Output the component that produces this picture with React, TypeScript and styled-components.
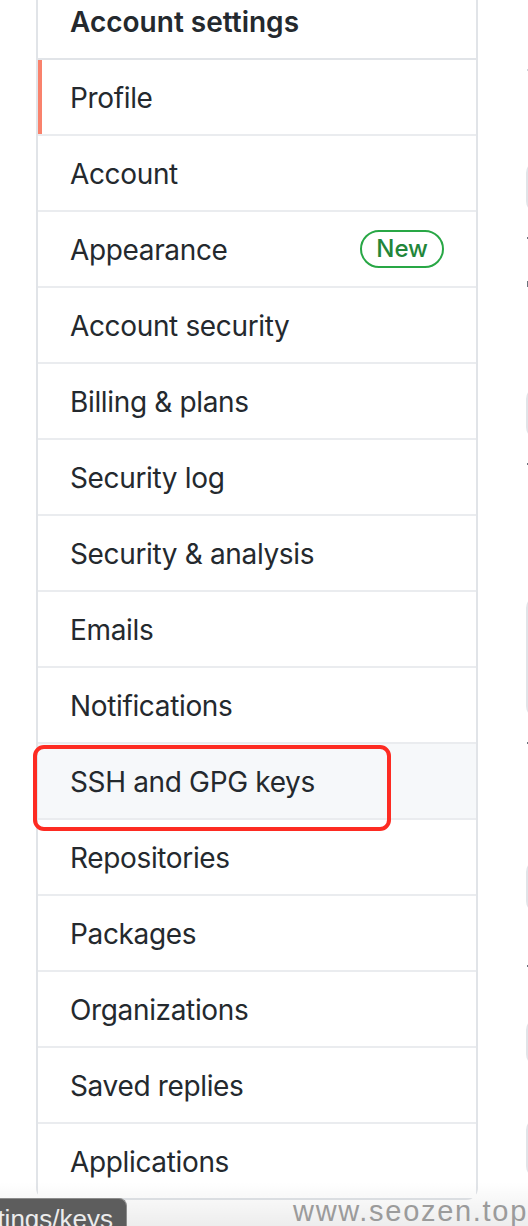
import React from "react";
import styled, { createGlobalStyle } from "styled-components";

const Global = createGlobalStyle`
  html, body { margin: 0; padding: 0; background: #ffffff; }
  body { width: 528px; height: 1226px; overflow: hidden; font-family: Inter, "Noto Sans", sans-serif; }
  #root { height: 1226px; }
`;

const Page = styled.div`
  position: relative;
  display: flex;
  align-items: flex-start;
  width: 528px;
  height: 1226px;
  overflow: hidden;
  background: #ffffff;
`;

const Sidebar = styled.nav`
  flex: 0 0 442px;
  box-sizing: border-box;
  margin: -18px 0 0 36px;
  border: 2px solid #e1e4e8;
  border-radius: 12px;
  background: #ffffff;
  color: #24292e;
`;

const Heading = styled.div`
  padding: 17px 32px 15px;
  font-size: 28px;
  line-height: 42px;
  font-weight: 600;
  border-bottom: 2px solid #e1e4e8;
`;

const Item = styled.a<{ $selected?: boolean; $hover?: boolean; $last?: boolean }>`
  position: relative;
  display: flex;
  align-items: center;
  justify-content: space-between;
  padding: 17px 32px 15px;
  font-size: 28px;
  line-height: 42px;
  font-weight: 400;
  letter-spacing: -0.35px;
  color: #24292e;
  text-decoration: none;
  background: ${(p) => (p.$hover ? "#f6f8fa" : "#ffffff")};
  border-bottom: ${(p) => (p.$last ? "none" : "2px solid #eaecef")};
  &::before {
    content: "";
    display: ${(p) => (p.$selected ? "block" : "none")};
    position: absolute;
    left: 0;
    top: 0;
    bottom: 0;
    width: 4px;
    background: #f9826c;
  }
`;

const Badge = styled.span`
  display: inline-block;
  margin-top: -2px;
  padding: 0 14px;
  font-size: 24px;
  line-height: 34px;
  font-weight: 500;
  letter-spacing: 0;
  color: #22863a;
  border: 2px solid #28a745;
  border-radius: 40px;
`;

const Annotation = styled.span`
  position: absolute;
  left: -5px;
  top: 1px;
  width: 358px;
  height: 86px;
  box-sizing: border-box;
  border: 4px solid #fd2b22;
  border-radius: 11px;
  z-index: 2;
  pointer-events: none;
`;

const Main = styled.div`
  flex: 1 1 auto;
  display: flex;
  flex-direction: column;
  align-items: flex-start;
  padding-left: 48px;
  min-width: 0;
  overflow: hidden;
`;

const Dot = styled.span<{ $mt: number; $h?: number; $light?: boolean }>`
  display: block;
  width: 2px;
  height: ${(p) => p.$h ?? 2}px;
  margin-top: ${(p) => p.$mt}px;
  margin-left: 1px;
  background: ${(p) => (p.$light ? "#d1d5da" : "#6a737d")};
`;

const Field = styled.span<{ $mt: number; $h: number }>`
  display: block;
  width: 30px;
  height: ${(p) => p.$h}px;
  margin-top: ${(p) => p.$mt}px;
  box-sizing: border-box;
  border: 2px solid #e1e4e8;
  border-radius: 12px;
  background: #fafbfc;
`;

const BottomShade = styled.div`
  position: absolute;
  left: 0;
  right: 0;
  bottom: 0;
  height: 44px;
  background: linear-gradient(to bottom, rgba(0, 0, 0, 0), rgba(0, 0, 0, 0.07));
  pointer-events: none;
`;

const StatusBubble = styled.div`
  position: absolute;
  left: 0;
  bottom: -2px;
  width: 127px;
  height: 30px;
  box-sizing: border-box;
  display: flex;
  justify-content: flex-end;
  overflow: hidden;
  padding: 7px 13px 0 0;
  background: #5d5d5d;
  border-top: 1px solid #8c8c8c;
  border-right: 1px solid #8c8c8c;
  border-top-right-radius: 8px;
  color: #ececec;
  font-family: "Liberation Sans", Arial, sans-serif;
  font-size: 26px;
  line-height: 26px;
  white-space: nowrap;
`;

const Watermark = styled.div`
  position: absolute;
  right: 0;
  bottom: -1px;
  color: #9b9b9b;
  font-family: "Liberation Sans", Arial, sans-serif;
  font-size: 29px;
  line-height: 32px;
  letter-spacing: 1.7px;
  white-space: nowrap;
`;

const items = [
  "Profile",
  "Account",
  "Appearance",
  "Account security",
  "Billing & plans",
  "Security log",
  "Security & analysis",
  "Emails",
  "Notifications",
  "SSH and GPG keys",
  "Repositories",
  "Packages",
  "Organizations",
  "Saved replies",
  "Applications",
];

export default function App() {
  return (
    <>
      <Global />
      <Page>
        <Sidebar>
          <Heading>Account settings</Heading>
          {items.map((label, i) => (
            <Item
              key={label}
              href="#"
              $selected={label === "Profile"}
              $hover={label === "SSH and GPG keys"}
              $last={i === items.length - 1}
            >
              <span>{label}</span>
              {label === "Appearance" && <Badge>New</Badge>}
              {label === "SSH and GPG keys" && <Annotation />}
            </Item>
          ))}
        </Sidebar>
        <Main>
          <Dot $mt={69} $light />
          <Field $mt={90} $h={52} />
          <Dot $mt={24} />
          <Dot $mt={42} $h={6} />
          <Field $mt={100} $h={52} />
          <Dot $mt={24} />
          <Field $mt={131} $h={122} />
          <Dot $mt={24} />
          <Field $mt={116} $h={53} />
          <Dot $mt={52} />
          <Field $mt={51} $h={48} />
          <Field $mt={52} $h={60} />
        </Main>
        <BottomShade />
        <StatusBubble>settings/keys</StatusBubble>
        <Watermark>www.seozen.top</Watermark>
      </Page>
    </>
  );
}
